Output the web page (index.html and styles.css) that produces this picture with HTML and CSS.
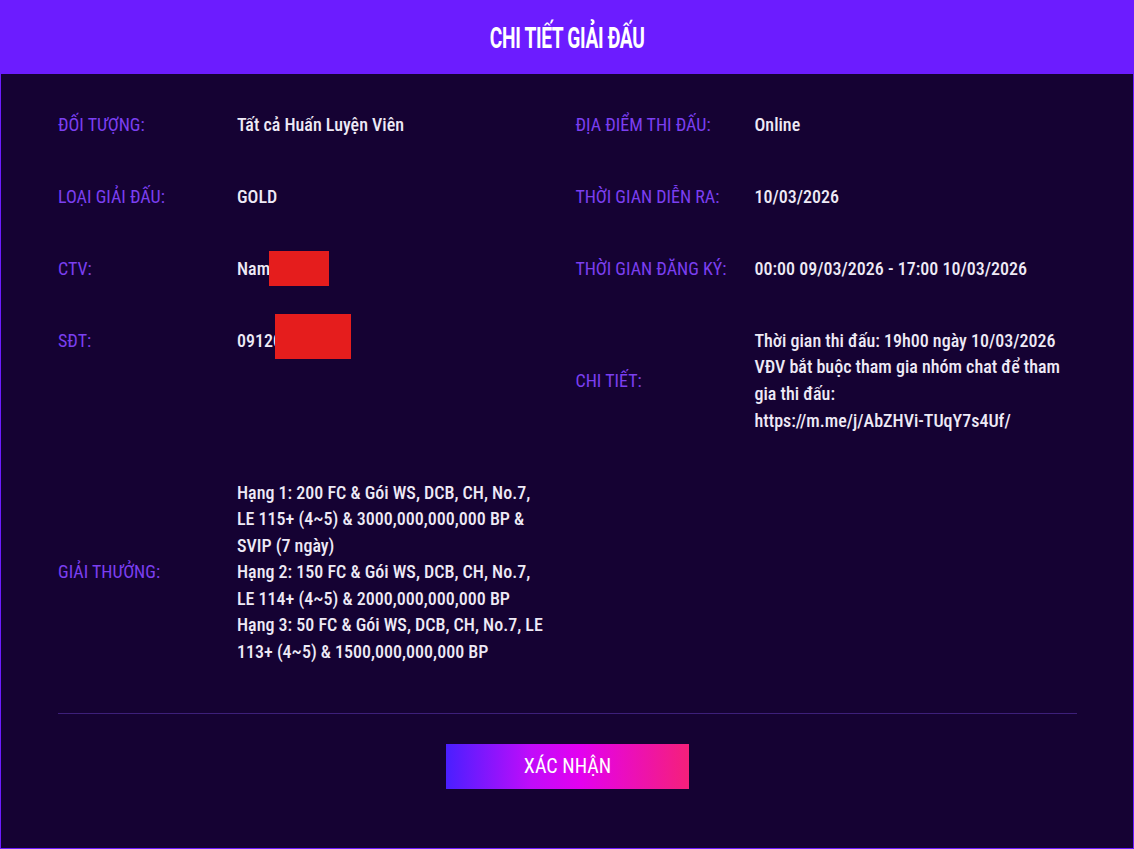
FILE: index.html
```html
<!DOCTYPE html>
<html lang="vi">
<head>
    <meta charset="UTF-8">
    <meta name="viewport" content="width=device-width, initial-scale=1.0">
    <title>Chi tiết giải đấu</title>
    <link rel="stylesheet" href="styles.css">
</head>
<body>
    <div class="modal">
        <div class="modal-header">
            <h2 class="modal-title">Chi tiết giải đấu</h2>
        </div>

        <div class="modal-body">
            <div class="detail-grid">
                <div class="detail-item">
                    <span class="detail-label">Đối tượng:</span>
                    <span class="detail-value">Tất cả Huấn Luyện Viên</span>
                </div>
                <div class="detail-item">
                    <span class="detail-label">Địa điểm thi đấu:</span>
                    <span class="detail-value">Online</span>
                </div>

                <div class="detail-item">
                    <span class="detail-label">Loại giải đấu:</span>
                    <span class="detail-value">GOLD</span>
                </div>
                <div class="detail-item">
                    <span class="detail-label">Thời gian diễn ra:</span>
                    <span class="detail-value">10/03/2026</span>
                </div>

                <div class="detail-item">
                    <span class="detail-label">CTV:</span>
                    <span class="detail-value">Nam<span class="redact redact-name"></span></span>
                </div>
                <div class="detail-item">
                    <span class="detail-label">Thời gian đăng ký:</span>
                    <span class="detail-value">00:00 09/03/2026 - 17:00 10/03/2026</span>
                </div>

                <div class="detail-item">
                    <span class="detail-label">SĐT:</span>
                    <span class="detail-value">09120<span class="redact redact-phone"></span></span>
                </div>
                <div class="detail-item">
                    <span class="detail-label">Chi tiết:</span>
                    <span class="detail-value">Thời gian thi đấu: 19h00 ngày 10/03/2026<br>VĐV bắt buộc tham gia nhóm chat để tham gia thi đấu:<br>https://m.me/j/AbZHVi-TUqY7s4Uf/</span>
                </div>

                <div class="detail-item">
                    <span class="detail-label">Giải thưởng:</span>
                    <span class="detail-value">Hạng 1: 200 FC &amp; Gói WS, DCB, CH, No.7, LE 115+ (4~5) &amp; 3000,000,000,000 BP &amp; SVIP (7 ngày)<br>Hạng 2: 150 FC &amp; Gói WS, DCB, CH, No.7, LE 114+ (4~5) &amp; 2000,000,000,000 BP<br>Hạng 3: 50 FC &amp; Gói WS, DCB, CH, No.7, LE 113+ (4~5) &amp; 1500,000,000,000 BP</span>
                </div>
                <div class="detail-item"></div>
            </div>

            <div class="divider"></div>

            <div class="modal-footer">
                <button class="confirm-btn">Xác nhận</button>
            </div>
        </div>
    </div>
</body>
</html>
```

FILE: styles.css
```css
body {
    margin: 0;
    background-color: #150233;
    font-family: "Roboto Condensed", "Liberation Sans Narrow", Roboto, sans-serif;
}
.modal {
    height: 849px;
    box-sizing: border-box;
    border: 1px solid #6c1cff;
    background-color: #150233;
}
.modal-header {
    height: 73px;
    background-color: #6c1cff;
    display: flex;
    align-items: center;
    justify-content: center;
}
.modal-title {
    margin: 0;
    color: #fff;
    font-family: Roboto, sans-serif;
    font-weight: 700;
    font-size: 29px;
    text-transform: uppercase;
    letter-spacing: -0.5px;
    transform: scaleX(0.66);
}
.modal-body {
    padding: 38px 56px 0 57px;
}
.detail-grid {
    display: grid;
    grid-template-columns: 1fr 1fr;
    column-gap: 16px;
    row-gap: 45.3px;
    align-items: start;
}
.detail-item {
    display: flex;
    align-items: center;
    font-size: 18px;
    line-height: 26.6px;
}
.detail-label {
    width: 179px;
    flex-shrink: 0;
    color: #7b3ff0;
    text-transform: uppercase;
}
.detail-value {
    flex: 1;
    padding-right: 11px;
    color: #eeeaf6;
    font-weight: 500;
}
/* red blocks hiding personal info */
.redact {
    display: inline-block;
    position: relative;
    top: -2px;
    background-color: #e51d1d;
    vertical-align: middle;
}
.redact-name {
    width: 60px;
    height: 35px;
    margin: -5px 0 -5px -1px;
}
.redact-phone {
    width: 76px;
    height: 45px;
    margin: -14px 0 -6px -7px;
}
.divider {
    height: 1px;
    margin-top: 47px;
    background-color: #3d1f7a;
}
.modal-footer {
    display: flex;
    justify-content: center;
    padding: 30px 0 58px;
}
.confirm-btn {
    width: 243px;
    height: 45px;
    border: none;
    color: #fff;
    font-family: inherit;
    font-size: 20px;
    font-weight: 400;
    text-transform: uppercase;
    background: linear-gradient(90deg, #4a1fff 0%, #c00cfa 35%, #e300f0 55%, #f5207a 100%);
    cursor: pointer;
}
```
